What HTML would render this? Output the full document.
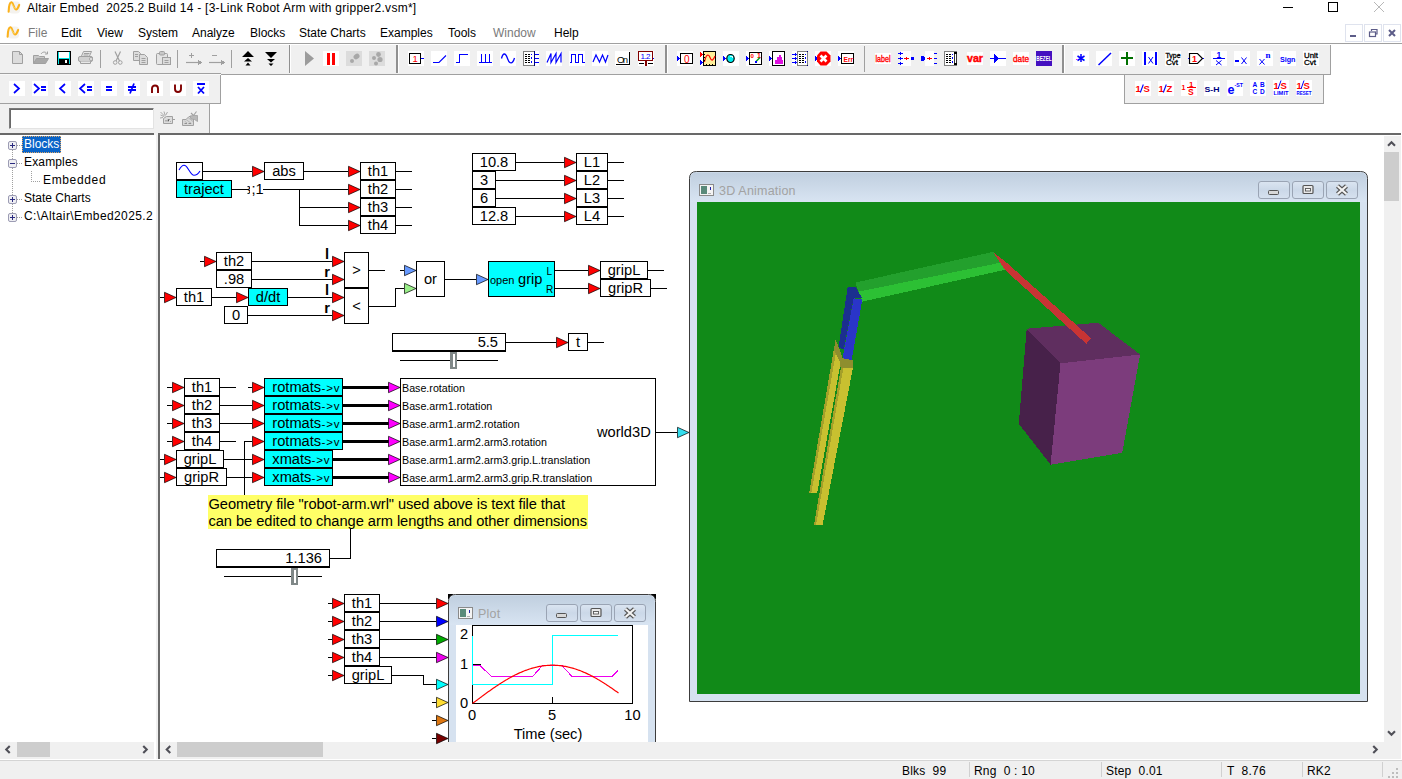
<!DOCTYPE html>
<html><head><meta charset="utf-8"><title>Altair Embed</title>
<style>
html,body{margin:0;padding:0;background:#fff;}
body{width:1402px;height:779px;overflow:hidden;position:relative;font-family:"Liberation Sans", sans-serif;}
.a{position:absolute;}
.t{position:absolute;white-space:nowrap;line-height:1;color:#000;}
svg text{font-family:"Liberation Sans", sans-serif;}
</style></head><body>
<div class="a" style="left:0px;top:43px;width:1402px;height:1px;background:#a0a0a0"></div>
<div class="a" style="left:0px;top:44px;width:1402px;height:1px;background:#fff"></div>
<div class="a" style="left:0px;top:45px;width:1330px;height:29px;background:#f0f0f0"></div>
<div class="a" style="left:221px;top:74px;width:1109px;height:1px;background:#a0a0a0"></div>
<div class="a" style="left:0px;top:73px;width:221px;height:1px;background:#a0a0a0"></div>
<div class="a" style="left:0px;top:74px;width:220px;height:1px;background:#f8f8f8"></div>
<div class="a" style="left:1330px;top:45px;width:1px;height:30px;background:#a0a0a0"></div>
<div class="a" style="left:289px;top:45px;width:1px;height:28px;background:#909090"></div>
<div class="a" style="left:290px;top:45px;width:1px;height:28px;background:#fff"></div>
<div class="a" style="left:396px;top:45px;width:2px;height:28px;background:#909090"></div>
<div class="a" style="left:398px;top:45px;width:1px;height:28px;background:#fff"></div>
<div class="a" style="left:665px;top:45px;width:2px;height:28px;background:#909090"></div>
<div class="a" style="left:667px;top:45px;width:1px;height:28px;background:#fff"></div>
<div class="a" style="left:1062px;top:45px;width:2px;height:28px;background:#909090"></div>
<div class="a" style="left:1064px;top:45px;width:1px;height:28px;background:#fff"></div>
<div class="a" style="left:100px;top:50px;width:1px;height:18px;background:#a0a0a0"></div>
<div class="a" style="left:177px;top:50px;width:1px;height:18px;background:#a0a0a0"></div>
<div class="a" style="left:231px;top:50px;width:1px;height:18px;background:#a0a0a0"></div>
<div class="a" style="left:864px;top:46px;width:1px;height:26px;background:#a0a0a0"></div>
<div class="a" style="left:0px;top:75px;width:220px;height:28px;background:#f0f0f0"></div>
<div class="a" style="left:0px;top:103px;width:221px;height:1px;background:#a0a0a0"></div>
<div class="a" style="left:220px;top:75px;width:1px;height:29px;background:#a0a0a0"></div>
<div class="a" style="left:0px;top:104px;width:209px;height:29px;background:#f0f0f0"></div>
<div class="a" style="left:209px;top:104px;width:1px;height:29px;background:#a0a0a0"></div>
<div class="a" style="left:1124px;top:75px;width:200px;height:29px;background:#f0f0f0"></div>
<div class="a" style="left:1124px;top:74px;width:1px;height:30px;background:#a0a0a0"></div>
<div class="a" style="left:1323px;top:74px;width:1px;height:30px;background:#a0a0a0"></div>
<div class="a" style="left:1124px;top:103px;width:200px;height:1px;background:#a0a0a0"></div>
<div class="a" style="left:9px;top:108px;width:145px;height:21px;background:#fff;border:1px solid #7a7a7a;border-right-color:#e3e3e3;border-bottom-color:#e3e3e3;box-sizing:border-box;box-shadow:inset 1px 1px 0 #696969"></div>
<div class="a" style="left:0px;top:133px;width:154px;height:2px;background:#696969"></div>
<div class="a" style="left:158px;top:133px;width:1243px;height:2px;background:#696969"></div>
<div class="a" style="left:154px;top:133px;width:4px;height:2px;background:#f4f4f4"></div>
<div class="a" style="left:0px;top:135px;width:154px;height:607px;background:#fff"></div>
<div class="a" style="left:154px;top:135px;width:2px;height:624px;background:#fff"></div>
<div class="a" style="left:156px;top:135px;width:2px;height:624px;background:#f0f0f0"></div>
<div class="a" style="left:158px;top:135px;width:2px;height:624px;background:#696969"></div>
<div class="a" style="left:0px;top:742px;width:154px;height:17px;background:#f0f0f0"></div>
<div class="a" style="left:160px;top:742px;width:1241px;height:17px;background:#f0f0f0"></div>
<div class="a" style="left:0px;top:761px;width:1402px;height:18px;background:#f0f0f0"></div>
<div class="a" style="left:0px;top:760px;width:1402px;height:1px;background:#d4d4d4"></div>
<div class="a" style="left:17px;top:742px;width:33px;height:15px;background:#cdcdcd"></div>
<div class="a" style="left:177px;top:742px;width:146px;height:15px;background:#cdcdcd"></div>
<div class="a" style="left:1384px;top:136px;width:17px;height:606px;background:#f0f0f0"></div>
<div class="a" style="left:1384px;top:152px;width:15px;height:49px;background:#cdcdcd"></div>
<div class="a" style="left:1401px;top:135px;width:1px;height:624px;background:#fff"></div>
<svg class="a" style="left:0;top:0" width="1402" height="779"><path d="M9.75 746.0 L6.25 749.5 L9.75 753.0" fill="none" stroke="#505058" stroke-width="2.1"/><path d="M143.25 746.0 L146.75 749.5 L143.25 753.0" fill="none" stroke="#505058" stroke-width="2.1"/><path d="M170.25 746.0 L166.75 749.5 L170.25 753.0" fill="none" stroke="#505058" stroke-width="2.1"/><path d="M1373.25 746.0 L1376.75 749.5 L1373.25 753.0" fill="none" stroke="#505058" stroke-width="2.1"/><path d="M1388.0 145.75 L1391.5 142.25 L1395.0 145.75" fill="none" stroke="#505058" stroke-width="2.1"/><path d="M1388.0 731.25 L1391.5 734.75 L1395.0 731.25" fill="none" stroke="#505058" stroke-width="2.1"/></svg>
<div class="a" style="left:969px;top:762px;width:1px;height:15px;background:#d0d0d0"></div>
<div class="a" style="left:1101px;top:762px;width:1px;height:15px;background:#d0d0d0"></div>
<div class="a" style="left:1221px;top:762px;width:1px;height:15px;background:#d0d0d0"></div>
<div class="a" style="left:1302px;top:762px;width:1px;height:15px;background:#d0d0d0"></div>
<div class="a" style="left:1382px;top:762px;width:1px;height:15px;background:#d0d0d0"></div>
<div class="t" style="left:902px;top:765px;font-size:12px;color:#000;letter-spacing:0.2px">Blks&nbsp;&nbsp;99</div>
<div class="t" style="left:974px;top:765px;font-size:12px;color:#000;letter-spacing:0.2px">Rng&nbsp;&nbsp;0 : 10</div>
<div class="t" style="left:1106px;top:765px;font-size:12px;color:#000;letter-spacing:0.2px">Step&nbsp;&nbsp;0.01</div>
<div class="t" style="left:1227px;top:765px;font-size:12px;color:#000;letter-spacing:0.2px">T&nbsp;&nbsp;8.76</div>
<div class="t" style="left:1307px;top:765px;font-size:12px;color:#000;letter-spacing:0.2px">RK2</div>
<svg class="a" style="left:1388px;top:766px" width="12" height="12"><g fill="#bdbdbd"><rect x="8" y="2" width="2" height="2"/><rect x="8" y="6" width="2" height="2"/><rect x="4" y="6" width="2" height="2"/><rect x="8" y="10" width="2" height="2"/><rect x="4" y="10" width="2" height="2"/><rect x="0" y="10" width="2" height="2"/></g></svg>
<div class="t" style="left:27px;top:2px;font-size:12px;color:#000;letter-spacing:0.27px">Altair Embed&nbsp;&nbsp;2025.2 Build 14 - [3-Link Robot Arm with gripper2.vsm*]</div>
<div class="t" style="left:28px;top:27px;font-size:12px;color:#7a7a7a;">File</div>
<div class="t" style="left:61px;top:27px;font-size:12px;color:#000;">Edit</div>
<div class="t" style="left:97px;top:27px;font-size:12px;color:#000;">View</div>
<div class="t" style="left:138px;top:27px;font-size:12px;color:#000;">System</div>
<div class="t" style="left:192px;top:27px;font-size:12px;color:#000;">Analyze</div>
<div class="t" style="left:250px;top:27px;font-size:12px;color:#000;">Blocks</div>
<div class="t" style="left:299px;top:27px;font-size:12px;color:#000;">State Charts</div>
<div class="t" style="left:380px;top:27px;font-size:12px;color:#000;">Examples</div>
<div class="t" style="left:448px;top:27px;font-size:12px;color:#000;">Tools</div>
<div class="t" style="left:493px;top:27px;font-size:12px;color:#7a7a7a;">Window</div>
<div class="t" style="left:554px;top:27px;font-size:12px;color:#000;">Help</div>
<svg class="a" style="left:7px;top:1px" width="14" height="13" viewBox="0 0 16 15"><rect x="2" y="0.5" width="13" height="14" rx="4" fill="#f4f2ee"/><path d="M1.8 12.5 C2 4,3.500 1.300,5.300 1.600 C7.500 2,7.800 9.500,10.300 9.800 C12 10,13 7,14 4.500" fill="none" stroke="#fbb21c" stroke-width="2.400" stroke-linecap="round"/><path d="M4.800 2.500 C6.500 4,7.500 8.500,10 9" fill="none" stroke="#fde27a" stroke-width="1"/></svg>
<svg class="a" style="left:6px;top:26px" width="14" height="13" viewBox="0 0 16 15"><rect x="2" y="0.5" width="13" height="14" rx="4" fill="#f4f2ee"/><path d="M1.8 12.5 C2 4,3.500 1.300,5.300 1.600 C7.500 2,7.800 9.500,10.300 9.800 C12 10,13 7,14 4.500" fill="none" stroke="#fbb21c" stroke-width="2.400" stroke-linecap="round"/><path d="M4.800 2.500 C6.500 4,7.500 8.500,10 9" fill="none" stroke="#fde27a" stroke-width="1"/></svg>
<svg class="a" style="left:1260px;top:0" width="142" height="44"><rect x="23" y="7" width="10" height="1" fill="#000"/><rect x="68.5" y="2.5" width="9" height="9" fill="none" stroke="#000"/><path d="M114 2 L124 12 M124 2 L114 12" stroke="#b0b0b0" stroke-width="0.9" fill="none"/><rect x="85.5" y="24.5" width="17" height="17" fill="#fff" stroke="#dfe3ee"/><rect x="104.5" y="24.5" width="17" height="17" fill="#fff" stroke="#dfe3ee"/><rect x="123.5" y="24.5" width="17" height="17" fill="#fff" stroke="#dfe3ee"/><rect x="90" y="35" width="6" height="2" fill="#5c5c88"/><path d="M111.5 31 V29.500 H117 V34 H115.500" fill="none" stroke="#5c5c88" stroke-width="1.2"/><rect x="109.500" y="32" width="6" height="4.500" fill="#fff" stroke="#5c5c88" stroke-width="1.2"/><path d="M129 30 L135 36 M135 30 L129 36" stroke="#5c5c88" stroke-width="2" fill="none"/></svg>
<svg class="a" style="left:0;top:136px" width="154" height="100" shape-rendering="crispEdges"><g stroke="#a0a0a0" stroke-dasharray="1 1" fill="none"><path d="M12.5 14 V78"/><path d="M17 9.500 H22"/><path d="M17 27.500 H22"/><path d="M31.500 35 V45.500 H40"/><path d="M17 63.500 H22"/><path d="M17 81.500 H22"/></g><rect x="8.5" y="5.5" width="8" height="8" rx="1.5" fill="#eeeef2" stroke="#9c9cb4" shape-rendering="geometricPrecision"/><rect x="10" y="9" width="5" height="1" fill="#2a2a80"/><rect x="12" y="7" width="1" height="5" fill="#2a2a80"/><rect x="8.5" y="23.5" width="8" height="8" rx="1.5" fill="#eeeef2" stroke="#9c9cb4" shape-rendering="geometricPrecision"/><rect x="10" y="27" width="5" height="1" fill="#2a2a80"/><rect x="8.5" y="59.5" width="8" height="8" rx="1.5" fill="#eeeef2" stroke="#9c9cb4" shape-rendering="geometricPrecision"/><rect x="10" y="63" width="5" height="1" fill="#2a2a80"/><rect x="12" y="61" width="1" height="5" fill="#2a2a80"/><rect x="8.5" y="77.5" width="8" height="8" rx="1.5" fill="#eeeef2" stroke="#9c9cb4" shape-rendering="geometricPrecision"/><rect x="10" y="81" width="5" height="1" fill="#2a2a80"/><rect x="12" y="79" width="1" height="5" fill="#2a2a80"/></svg>
<div class="a" style="left:22px;top:136px;width:39px;height:17px;background:#0a64c8;outline:1px dotted #e0a868;outline-offset:-1px"></div>
<div class="t" style="left:24px;top:138px;font-size:12px;color:#fff;">Blocks</div>
<div class="t" style="left:24px;top:156px;font-size:12px;color:#000;letter-spacing:0.15px">Examples</div>
<div class="t" style="left:43px;top:174px;font-size:12px;color:#000;letter-spacing:0.65px">Embedded</div>
<div class="t" style="left:24px;top:192px;font-size:12px;color:#000;">State Charts</div>
<div class="t" style="left:24px;top:210px;font-size:12px;color:#000;letter-spacing:0.4px">C:\Altair\Embed2025.2</div>
<svg class="a" style="left:0;top:0" width="1402" height="779" viewBox="0 0 1402 779" shape-rendering="crispEdges">
<rect x="176.5" y="162.5" width="26" height="17" fill="#fff" stroke="#000" stroke-width="1"/>
<path d="M179 170 C180.500 167.500,182 165.300,184 165.300 C186.500 165.300,187.500 168,189 170.300 C190.500 172.800,192 175.300,194 175.300 C196.500 175.300,198.500 173.500,200 171" fill="none" stroke="#0000ff" stroke-width="1.1" shape-rendering="geometricPrecision"/>
<rect x="176.5" y="180.5" width="55" height="17" fill="#00ffff" stroke="#000" stroke-width="1"/>
<text x="204.0" y="194.1345" font-size="14.67" text-anchor="middle" fill="#000" >traject</text>
<rect x="203" y="171" width="49" height="1" fill="#000"/>
<polygon points="252.5,166.3 264,171.5 252.5,176.7" fill="#ff0000" stroke="#000" stroke-width="0.7" shape-rendering="geometricPrecision"/>
<rect x="264.5" y="162.5" width="39" height="17" fill="#fff" stroke="#000" stroke-width="1"/>
<text x="284.0" y="176.1345" font-size="14.67" text-anchor="middle" fill="#000" >abs</text>
<rect x="304" y="171" width="44" height="1" fill="#000"/>
<polygon points="348.5,166.3 360,171.5 348.5,176.7" fill="#ff0000" stroke="#000" stroke-width="0.7" shape-rendering="geometricPrecision"/>
<rect x="232" y="189" width="16" height="1" fill="#000"/>
<clipPath id="cpsemi"><rect x="247.5" y="180" width="2.5" height="20"/></clipPath><text x="244.500" y="194" font-size="14.67" clip-path="url(#cpsemi)">&#1079;</text>
<text x="251.5" y="194" font-size="14.67" text-anchor="start" fill="#000" >;1</text>
<rect x="263" y="189" width="85" height="1" fill="#000"/>
<polygon points="348.5,184.3 360,189.5 348.5,194.7" fill="#ff0000" stroke="#000" stroke-width="0.7" shape-rendering="geometricPrecision"/>
<rect x="299" y="189" width="1" height="37" fill="#000"/>
<rect x="299" y="207" width="49" height="1" fill="#000"/>
<polygon points="348.5,202.3 360,207.5 348.5,212.7" fill="#ff0000" stroke="#000" stroke-width="0.7" shape-rendering="geometricPrecision"/>
<rect x="299" y="225" width="49" height="1" fill="#000"/>
<polygon points="348.5,220.3 360,225.5 348.5,230.7" fill="#ff0000" stroke="#000" stroke-width="0.7" shape-rendering="geometricPrecision"/>
<rect x="360.5" y="162.5" width="35" height="17" fill="#fff" stroke="#000" stroke-width="1"/>
<text x="378.0" y="176.1345" font-size="14.67" text-anchor="middle" fill="#000" >th1</text>
<rect x="396" y="171" width="16" height="1" fill="#000"/>
<rect x="360.5" y="180.5" width="35" height="17" fill="#fff" stroke="#000" stroke-width="1"/>
<text x="378.0" y="194.1345" font-size="14.67" text-anchor="middle" fill="#000" >th2</text>
<rect x="396" y="189" width="16" height="1" fill="#000"/>
<rect x="360.5" y="198.5" width="35" height="17" fill="#fff" stroke="#000" stroke-width="1"/>
<text x="378.0" y="212.1345" font-size="14.67" text-anchor="middle" fill="#000" >th3</text>
<rect x="396" y="207" width="16" height="1" fill="#000"/>
<rect x="360.5" y="216.5" width="35" height="17" fill="#fff" stroke="#000" stroke-width="1"/>
<text x="378.0" y="230.1345" font-size="14.67" text-anchor="middle" fill="#000" >th4</text>
<rect x="396" y="225" width="16" height="1" fill="#000"/>
<rect x="472.5" y="153.5" width="43" height="17" fill="#fff" stroke="#000" stroke-width="1"/>
<text x="494.0" y="167.1345" font-size="14.67" text-anchor="middle" fill="#000" >10.8</text>
<rect x="516" y="162" width="48" height="1" fill="#000"/>
<polygon points="564.5,157.3 576,162.5 564.5,167.7" fill="#ff0000" stroke="#000" stroke-width="0.7" shape-rendering="geometricPrecision"/>
<rect x="576.5" y="153.5" width="31" height="17" fill="#fff" stroke="#000" stroke-width="1"/>
<text x="592.0" y="167.1345" font-size="14.67" text-anchor="middle" fill="#000" >L1</text>
<rect x="608" y="162" width="16" height="1" fill="#000"/>
<rect x="472.5" y="171.5" width="23" height="17" fill="#fff" stroke="#000" stroke-width="1"/>
<text x="484.0" y="185.1345" font-size="14.67" text-anchor="middle" fill="#000" >3</text>
<rect x="496" y="180" width="68" height="1" fill="#000"/>
<polygon points="564.5,175.3 576,180.5 564.5,185.7" fill="#ff0000" stroke="#000" stroke-width="0.7" shape-rendering="geometricPrecision"/>
<rect x="576.5" y="171.5" width="31" height="17" fill="#fff" stroke="#000" stroke-width="1"/>
<text x="592.0" y="185.1345" font-size="14.67" text-anchor="middle" fill="#000" >L2</text>
<rect x="608" y="180" width="16" height="1" fill="#000"/>
<rect x="472.5" y="189.5" width="23" height="17" fill="#fff" stroke="#000" stroke-width="1"/>
<text x="484.0" y="203.1345" font-size="14.67" text-anchor="middle" fill="#000" >6</text>
<rect x="496" y="198" width="68" height="1" fill="#000"/>
<polygon points="564.5,193.3 576,198.5 564.5,203.7" fill="#ff0000" stroke="#000" stroke-width="0.7" shape-rendering="geometricPrecision"/>
<rect x="576.5" y="189.5" width="31" height="17" fill="#fff" stroke="#000" stroke-width="1"/>
<text x="592.0" y="203.1345" font-size="14.67" text-anchor="middle" fill="#000" >L3</text>
<rect x="608" y="198" width="16" height="1" fill="#000"/>
<rect x="472.5" y="207.5" width="43" height="17" fill="#fff" stroke="#000" stroke-width="1"/>
<text x="494.0" y="221.1345" font-size="14.67" text-anchor="middle" fill="#000" >12.8</text>
<rect x="516" y="216" width="48" height="1" fill="#000"/>
<polygon points="564.5,211.3 576,216.5 564.5,221.7" fill="#ff0000" stroke="#000" stroke-width="0.7" shape-rendering="geometricPrecision"/>
<rect x="576.5" y="207.5" width="31" height="17" fill="#fff" stroke="#000" stroke-width="1"/>
<text x="592.0" y="221.1345" font-size="14.67" text-anchor="middle" fill="#000" >L4</text>
<rect x="608" y="216" width="16" height="1" fill="#000"/>
<rect x="200" y="261" width="4" height="1" fill="#000"/>
<polygon points="204.5,256.3 216,261.5 204.5,266.7" fill="#ff0000" stroke="#000" stroke-width="0.7" shape-rendering="geometricPrecision"/>
<rect x="216.5" y="252.5" width="35" height="17" fill="#fff" stroke="#000" stroke-width="1"/>
<text x="234.0" y="266.1345" font-size="14.67" text-anchor="middle" fill="#000" >th2</text>
<rect x="216.5" y="270.5" width="35" height="17" fill="#fff" stroke="#000" stroke-width="1"/>
<text x="234.0" y="284.1345" font-size="14.67" text-anchor="middle" fill="#000" >.98</text>
<rect x="160" y="297" width="4" height="1" fill="#000"/>
<polygon points="164.5,292.3 176,297.5 164.5,302.7" fill="#ff0000" stroke="#000" stroke-width="0.7" shape-rendering="geometricPrecision"/>
<rect x="176.5" y="288.5" width="35" height="17" fill="#fff" stroke="#000" stroke-width="1"/>
<text x="194.0" y="302.1345" font-size="14.67" text-anchor="middle" fill="#000" >th1</text>
<rect x="212" y="297" width="24" height="1" fill="#000"/>
<polygon points="236.5,292.3 248,297.5 236.5,302.7" fill="#ff0000" stroke="#000" stroke-width="0.7" shape-rendering="geometricPrecision"/>
<rect x="248.5" y="288.5" width="39" height="17" fill="#00ffff" stroke="#000" stroke-width="1"/>
<text x="268.0" y="302.1345" font-size="14.67" text-anchor="middle" fill="#000" >d/dt</text>
<rect x="224.5" y="306.5" width="23" height="17" fill="#fff" stroke="#000" stroke-width="1"/>
<text x="236.0" y="320.1345" font-size="14.67" text-anchor="middle" fill="#000" >0</text>
<rect x="252" y="261" width="80" height="1" fill="#000"/>
<polygon points="332.5,256.3 344,261.5 332.5,266.7" fill="#ff0000" stroke="#000" stroke-width="0.7" shape-rendering="geometricPrecision"/>
<rect x="252" y="279" width="80" height="1" fill="#000"/>
<polygon points="332.5,274.3 344,279.5 332.5,284.7" fill="#ff0000" stroke="#000" stroke-width="0.7" shape-rendering="geometricPrecision"/>
<rect x="288" y="297" width="44" height="1" fill="#000"/>
<polygon points="332.5,292.3 344,297.5 332.5,302.7" fill="#ff0000" stroke="#000" stroke-width="0.7" shape-rendering="geometricPrecision"/>
<rect x="248" y="315" width="84" height="1" fill="#000"/>
<polygon points="332.5,310.3 344,315.5 332.5,320.7" fill="#ff0000" stroke="#000" stroke-width="0.7" shape-rendering="geometricPrecision"/>
<text x="327" y="259" font-size="14.67" text-anchor="middle" fill="#000" font-weight="bold">l</text>
<text x="327" y="277" font-size="14.67" text-anchor="middle" fill="#000" font-weight="bold">r</text>
<text x="327" y="295" font-size="14.67" text-anchor="middle" fill="#000" font-weight="bold">l</text>
<text x="327" y="313" font-size="14.67" text-anchor="middle" fill="#000" font-weight="bold">r</text>
<rect x="344.5" y="252.5" width="24" height="35" fill="#fff" stroke="#000" stroke-width="1"/>
<text x="356.5" y="275.1345" font-size="14.67" text-anchor="middle" fill="#000" >&gt;</text>
<rect x="344.5" y="288.5" width="24" height="35" fill="#fff" stroke="#000" stroke-width="1"/>
<text x="356.5" y="311.1345" font-size="14.67" text-anchor="middle" fill="#000" >&lt;</text>
<rect x="369" y="270" width="16" height="1" fill="#000"/>
<rect x="369" y="306" width="27" height="1" fill="#000"/>
<rect x="395" y="288" width="1" height="19" fill="#000"/>
<rect x="395" y="288" width="9" height="1" fill="#000"/>
<rect x="400" y="270" width="4" height="1" fill="#000"/>
<polygon points="404.5,265.3 416,270.5 404.5,275.7" fill="#6699ff" stroke="#000" stroke-width="0.7" shape-rendering="geometricPrecision"/>
<polygon points="404.5,283.3 416,288.5 404.5,293.7" fill="#99ee88" stroke="#000" stroke-width="0.7" shape-rendering="geometricPrecision"/>
<rect x="416.5" y="261.5" width="28" height="35" fill="#fff" stroke="#000" stroke-width="1"/>
<text x="430.5" y="284.1345" font-size="14.67" text-anchor="middle" fill="#000" >or</text>
<rect x="445" y="279" width="31" height="1" fill="#000"/>
<polygon points="476.5,274.3 488,279.5 476.5,284.7" fill="#6699ff" stroke="#000" stroke-width="0.7" shape-rendering="geometricPrecision"/>
<rect x="488.5" y="261.5" width="66" height="35" fill="#00ffff" stroke="#000" stroke-width="1"/>
<text x="490" y="284" font-size="11" text-anchor="start" fill="#000" >open</text>
<text x="518" y="284" font-size="14.67" text-anchor="start" fill="#000" >grip</text>
<text x="546.5" y="275" font-size="10" text-anchor="start" fill="#000" >L</text>
<text x="546" y="293" font-size="10" text-anchor="start" fill="#000" >R</text>
<rect x="555" y="270" width="33" height="1" fill="#000"/>
<polygon points="588.5,265.3 600,270.5 588.5,275.7" fill="#ff0000" stroke="#000" stroke-width="0.7" shape-rendering="geometricPrecision"/>
<rect x="555" y="288" width="33" height="1" fill="#000"/>
<polygon points="588.5,283.3 600,288.5 588.5,293.7" fill="#ff0000" stroke="#000" stroke-width="0.7" shape-rendering="geometricPrecision"/>
<rect x="600.5" y="261.5" width="47" height="17" fill="#fff" stroke="#000" stroke-width="1"/>
<text x="624.0" y="275.1345" font-size="14.67" text-anchor="middle" fill="#000" >gripL</text>
<rect x="600.5" y="279.5" width="50" height="17" fill="#fff" stroke="#000" stroke-width="1"/>
<text x="625.5" y="293.1345" font-size="14.67" text-anchor="middle" fill="#000" >gripR</text>
<rect x="648" y="270" width="16" height="1" fill="#000"/>
<rect x="651" y="288" width="16" height="1" fill="#000"/>
<rect x="392.5" y="333.5" width="113" height="17" fill="#fff" stroke="#000" stroke-width="1"/>
<rect x="392" y="351" width="114" height="1" fill="#000"/>
<text x="498" y="347" font-size="14.67" text-anchor="end" fill="#000" >5.5</text>
<rect x="506" y="342" width="50" height="1" fill="#000"/>
<polygon points="556.5,337.3 568,342.5 556.5,347.7" fill="#ff0000" stroke="#000" stroke-width="0.7" shape-rendering="geometricPrecision"/>
<rect x="568.5" y="333.5" width="19" height="17" fill="#fff" stroke="#000" stroke-width="1"/>
<text x="578.0" y="347.1345" font-size="14.67" text-anchor="middle" fill="#000" >t</text>
<rect x="588" y="342" width="16" height="1" fill="#000"/>
<rect x="400" y="360" width="98" height="1" fill="#000"/>
<rect x="450" y="352" width="7" height="17" fill="#808888"/><rect x="452.5" y="354" width="2" height="13" fill="#fff"/>
<rect x="167" y="387" width="5" height="1" fill="#000"/>
<polygon points="172.5,382.3 184,387.5 172.5,392.7" fill="#ff0000" stroke="#000" stroke-width="0.7" shape-rendering="geometricPrecision"/>
<rect x="184.5" y="378.5" width="35" height="17" fill="#fff" stroke="#000" stroke-width="1"/>
<text x="202.0" y="392.1345" font-size="14.67" text-anchor="middle" fill="#000" >th1</text>
<rect x="167" y="405" width="5" height="1" fill="#000"/>
<polygon points="172.5,400.3 184,405.5 172.5,410.7" fill="#ff0000" stroke="#000" stroke-width="0.7" shape-rendering="geometricPrecision"/>
<rect x="184.5" y="396.5" width="35" height="17" fill="#fff" stroke="#000" stroke-width="1"/>
<text x="202.0" y="410.1345" font-size="14.67" text-anchor="middle" fill="#000" >th2</text>
<rect x="167" y="423" width="5" height="1" fill="#000"/>
<polygon points="172.5,418.3 184,423.5 172.5,428.7" fill="#ff0000" stroke="#000" stroke-width="0.7" shape-rendering="geometricPrecision"/>
<rect x="184.5" y="414.5" width="35" height="17" fill="#fff" stroke="#000" stroke-width="1"/>
<text x="202.0" y="428.1345" font-size="14.67" text-anchor="middle" fill="#000" >th3</text>
<rect x="167" y="441" width="5" height="1" fill="#000"/>
<polygon points="172.5,436.3 184,441.5 172.5,446.7" fill="#ff0000" stroke="#000" stroke-width="0.7" shape-rendering="geometricPrecision"/>
<rect x="184.5" y="432.5" width="35" height="17" fill="#fff" stroke="#000" stroke-width="1"/>
<text x="202.0" y="446.1345" font-size="14.67" text-anchor="middle" fill="#000" >th4</text>
<rect x="160" y="459" width="4" height="1" fill="#000"/>
<polygon points="164.5,454.3 176,459.5 164.5,464.7" fill="#ff0000" stroke="#000" stroke-width="0.7" shape-rendering="geometricPrecision"/>
<rect x="176.5" y="450.5" width="47" height="17" fill="#fff" stroke="#000" stroke-width="1"/>
<text x="200.0" y="464.1345" font-size="14.67" text-anchor="middle" fill="#000" >gripL</text>
<rect x="160" y="477" width="4" height="1" fill="#000"/>
<polygon points="164.5,472.3 176,477.5 164.5,482.7" fill="#ff0000" stroke="#000" stroke-width="0.7" shape-rendering="geometricPrecision"/>
<rect x="176.5" y="468.5" width="50" height="17" fill="#fff" stroke="#000" stroke-width="1"/>
<text x="201.5" y="482.1345" font-size="14.67" text-anchor="middle" fill="#000" >gripR</text>
<rect x="220" y="387" width="16" height="1" fill="#000"/>
<rect x="248" y="387" width="4" height="1" fill="#000"/>
<rect x="220" y="405" width="32" height="1" fill="#000"/>
<rect x="220" y="423" width="32" height="1" fill="#000"/>
<rect x="220" y="441" width="16" height="1" fill="#000"/>
<rect x="244" y="441" width="1" height="54" fill="#000"/>
<rect x="244" y="441" width="8" height="1" fill="#000"/>
<rect x="224" y="459" width="28" height="1" fill="#000"/>
<rect x="227" y="477" width="25" height="1" fill="#000"/>
<rect x="400.5" y="378.5" width="255" height="107" fill="#fff" stroke="#000" stroke-width="1"/>
<polygon points="252.5,382.3 264,387.5 252.5,392.7" fill="#ff0000" stroke="#000" stroke-width="0.7" shape-rendering="geometricPrecision"/>
<rect x="264.5" y="378.5" width="78" height="17" fill="#00ffff" stroke="#000" stroke-width="1"/>
<text x="272.3" y="392" font-size="14.67" text-anchor="start" fill="#000" >rotmats</text>
<text x="321.5" y="391.5" font-size="11.5" text-anchor="start" fill="#000" textLength="18">-&gt;v</text>
<rect x="343" y="386" width="46" height="3" fill="#000"/>
<polygon points="388.5,382.3 400,387.5 388.5,392.7" fill="#ff00ff" stroke="#000" stroke-width="0.7" shape-rendering="geometricPrecision"/>
<text x="402" y="391.5" font-size="10.7" text-anchor="start" fill="#000" >Base.rotation</text>
<polygon points="252.5,400.3 264,405.5 252.5,410.7" fill="#ff0000" stroke="#000" stroke-width="0.7" shape-rendering="geometricPrecision"/>
<rect x="264.5" y="396.5" width="78" height="17" fill="#00ffff" stroke="#000" stroke-width="1"/>
<text x="272.3" y="410" font-size="14.67" text-anchor="start" fill="#000" >rotmats</text>
<text x="321.5" y="409.5" font-size="11.5" text-anchor="start" fill="#000" textLength="18">-&gt;v</text>
<rect x="343" y="404" width="46" height="3" fill="#000"/>
<polygon points="388.5,400.3 400,405.5 388.5,410.7" fill="#ff00ff" stroke="#000" stroke-width="0.7" shape-rendering="geometricPrecision"/>
<text x="402" y="409.5" font-size="10.7" text-anchor="start" fill="#000" >Base.arm1.rotation</text>
<polygon points="252.5,418.3 264,423.5 252.5,428.7" fill="#ff0000" stroke="#000" stroke-width="0.7" shape-rendering="geometricPrecision"/>
<rect x="264.5" y="414.5" width="78" height="17" fill="#00ffff" stroke="#000" stroke-width="1"/>
<text x="272.3" y="428" font-size="14.67" text-anchor="start" fill="#000" >rotmats</text>
<text x="321.5" y="427.5" font-size="11.5" text-anchor="start" fill="#000" textLength="18">-&gt;v</text>
<rect x="343" y="422" width="46" height="3" fill="#000"/>
<polygon points="388.5,418.3 400,423.5 388.5,428.7" fill="#ff00ff" stroke="#000" stroke-width="0.7" shape-rendering="geometricPrecision"/>
<text x="402" y="427.5" font-size="10.7" text-anchor="start" fill="#000" >Base.arm1.arm2.rotation</text>
<polygon points="252.5,436.3 264,441.5 252.5,446.7" fill="#ff0000" stroke="#000" stroke-width="0.7" shape-rendering="geometricPrecision"/>
<rect x="264.5" y="432.5" width="78" height="17" fill="#00ffff" stroke="#000" stroke-width="1"/>
<text x="272.3" y="446" font-size="14.67" text-anchor="start" fill="#000" >rotmats</text>
<text x="321.5" y="445.5" font-size="11.5" text-anchor="start" fill="#000" textLength="18">-&gt;v</text>
<rect x="343" y="440" width="46" height="3" fill="#000"/>
<polygon points="388.5,436.3 400,441.5 388.5,446.7" fill="#ff00ff" stroke="#000" stroke-width="0.7" shape-rendering="geometricPrecision"/>
<text x="402" y="445.5" font-size="10.7" text-anchor="start" fill="#000" >Base.arm1.arm2.arm3.rotation</text>
<polygon points="252.5,454.3 264,459.5 252.5,464.7" fill="#ff0000" stroke="#000" stroke-width="0.7" shape-rendering="geometricPrecision"/>
<rect x="264.5" y="450.5" width="68" height="17" fill="#00ffff" stroke="#000" stroke-width="1"/>
<text x="272.3" y="464" font-size="14.67" text-anchor="start" fill="#000" >xmats</text>
<text x="311.5" y="463.5" font-size="11.5" text-anchor="start" fill="#000" textLength="18">-&gt;v</text>
<rect x="333" y="458" width="56" height="3" fill="#000"/>
<polygon points="388.5,454.3 400,459.5 388.5,464.7" fill="#ff00ff" stroke="#000" stroke-width="0.7" shape-rendering="geometricPrecision"/>
<text x="402" y="463.5" font-size="10.7" text-anchor="start" fill="#000" >Base.arm1.arm2.arm3.grip.L.translation</text>
<polygon points="252.5,472.3 264,477.5 252.5,482.7" fill="#ff0000" stroke="#000" stroke-width="0.7" shape-rendering="geometricPrecision"/>
<rect x="264.5" y="468.5" width="68" height="17" fill="#00ffff" stroke="#000" stroke-width="1"/>
<text x="272.3" y="482" font-size="14.67" text-anchor="start" fill="#000" >xmats</text>
<text x="311.5" y="481.5" font-size="11.5" text-anchor="start" fill="#000" textLength="18">-&gt;v</text>
<rect x="333" y="476" width="56" height="3" fill="#000"/>
<polygon points="388.5,472.3 400,477.5 388.5,482.7" fill="#ff00ff" stroke="#000" stroke-width="0.7" shape-rendering="geometricPrecision"/>
<text x="402" y="481.5" font-size="10.7" text-anchor="start" fill="#000" >Base.arm1.arm2.arm3.grip.R.translation</text>
<text x="597" y="437" font-size="14.67" text-anchor="start" fill="#000" >world3D</text>
<rect x="656" y="432" width="21" height="1" fill="#000"/>
<polygon points="677.5,427.3 689,432.5 677.5,437.7" fill="#33ddee" stroke="#000" stroke-width="0.7" shape-rendering="geometricPrecision"/>
<rect x="208" y="495" width="380" height="34" fill="#ffff66"/>
<text x="208.5" y="509" font-size="14.67" text-anchor="start" fill="#000" textLength="356.500">Geometry file "robot-arm.wrl" used above is text file that</text>
<text x="208.5" y="526" font-size="14.67" text-anchor="start" fill="#000" textLength="378.500">can be edited to change arm lengths and other dimensions</text>
<rect x="350" y="529" width="1" height="30" fill="#000"/>
<rect x="330" y="558" width="21" height="1" fill="#000"/>
<rect x="216.5" y="549.5" width="113" height="17" fill="#fff" stroke="#000" stroke-width="1"/>
<rect x="216" y="567" width="114" height="1" fill="#000"/>
<text x="322" y="563" font-size="14.67" text-anchor="end" fill="#000" >1.136</text>
<rect x="224" y="576" width="98" height="1" fill="#000"/>
<rect x="291" y="568" width="7" height="17" fill="#808888"/><rect x="293.5" y="570" width="2" height="13" fill="#fff"/>
<rect x="328" y="603" width="4" height="1" fill="#000"/>
<polygon points="332.5,598.3 344,603.5 332.5,608.7" fill="#ff0000" stroke="#000" stroke-width="0.7" shape-rendering="geometricPrecision"/>
<rect x="344.5" y="594.5" width="35" height="17" fill="#fff" stroke="#000" stroke-width="1"/>
<text x="362.0" y="608.1345" font-size="14.67" text-anchor="middle" fill="#000" >th1</text>
<rect x="328" y="621" width="4" height="1" fill="#000"/>
<polygon points="332.5,616.3 344,621.5 332.5,626.7" fill="#ff0000" stroke="#000" stroke-width="0.7" shape-rendering="geometricPrecision"/>
<rect x="344.5" y="612.5" width="35" height="17" fill="#fff" stroke="#000" stroke-width="1"/>
<text x="362.0" y="626.1345" font-size="14.67" text-anchor="middle" fill="#000" >th2</text>
<rect x="328" y="639" width="4" height="1" fill="#000"/>
<polygon points="332.5,634.3 344,639.5 332.5,644.7" fill="#ff0000" stroke="#000" stroke-width="0.7" shape-rendering="geometricPrecision"/>
<rect x="344.5" y="630.5" width="35" height="17" fill="#fff" stroke="#000" stroke-width="1"/>
<text x="362.0" y="644.1345" font-size="14.67" text-anchor="middle" fill="#000" >th3</text>
<rect x="328" y="657" width="4" height="1" fill="#000"/>
<polygon points="332.5,652.3 344,657.5 332.5,662.7" fill="#ff0000" stroke="#000" stroke-width="0.7" shape-rendering="geometricPrecision"/>
<rect x="344.5" y="648.5" width="35" height="17" fill="#fff" stroke="#000" stroke-width="1"/>
<text x="362.0" y="662.1345" font-size="14.67" text-anchor="middle" fill="#000" >th4</text>
<rect x="328" y="675" width="4" height="1" fill="#000"/>
<polygon points="332.5,670.3 344,675.5 332.5,680.7" fill="#ff0000" stroke="#000" stroke-width="0.7" shape-rendering="geometricPrecision"/>
<rect x="344.5" y="666.5" width="47" height="17" fill="#fff" stroke="#000" stroke-width="1"/>
<text x="368.0" y="680.1345" font-size="14.67" text-anchor="middle" fill="#000" >gripL</text>
<rect x="380" y="603" width="56" height="1" fill="#000"/>
<rect x="380" y="621" width="56" height="1" fill="#000"/>
<rect x="380" y="639" width="56" height="1" fill="#000"/>
<rect x="380" y="657" width="56" height="1" fill="#000"/>
<rect x="392" y="675" width="32" height="1" fill="#000"/>
<rect x="423" y="675" width="1" height="10" fill="#000"/>
<rect x="423" y="684" width="13" height="1" fill="#000"/>
<rect x="432" y="702" width="4" height="1" fill="#000"/>
<rect x="432" y="720" width="4" height="1" fill="#000"/>
<rect x="432" y="738" width="4" height="1" fill="#000"/>
<polygon points="436.5,598.3 448,603.5 436.5,608.7" fill="#ff0000" stroke="#000" stroke-width="0.7" shape-rendering="geometricPrecision"/>
<polygon points="436.5,616.3 448,621.5 436.5,626.7" fill="#0000ff" stroke="#000" stroke-width="0.7" shape-rendering="geometricPrecision"/>
<polygon points="436.5,634.3 448,639.5 436.5,644.7" fill="#00aa00" stroke="#000" stroke-width="0.7" shape-rendering="geometricPrecision"/>
<polygon points="436.5,652.3 448,657.5 436.5,662.7" fill="#ee00ee" stroke="#000" stroke-width="0.7" shape-rendering="geometricPrecision"/>
<polygon points="436.5,679.3 448,684.5 436.5,689.7" fill="#00ffff" stroke="#000" stroke-width="0.7" shape-rendering="geometricPrecision"/>
<polygon points="436.5,697.3 448,702.5 436.5,707.7" fill="#ffdd33" stroke="#000" stroke-width="0.7" shape-rendering="geometricPrecision"/>
<polygon points="436.5,715.3 448,720.5 436.5,725.7" fill="#dd7711" stroke="#000" stroke-width="0.7" shape-rendering="geometricPrecision"/>
<polygon points="436.5,733.3 448,738.5 436.5,743.7" fill="#770000" stroke="#000" stroke-width="0.7" shape-rendering="geometricPrecision"/>
<defs><linearGradient id="tg" x1="0" y1="0" x2="0" y2="1"><stop offset="0" stop-color="#c0cfdf"/><stop offset="1" stop-color="#d8e4f2"/></linearGradient><linearGradient id="bg" x1="0" y1="0" x2="0" y2="1"><stop offset="0" stop-color="#dbe5f1"/><stop offset="0.5" stop-color="#cbd8e8"/><stop offset="1" stop-color="#d6e1ef"/></linearGradient></defs>
<path d="M689.5 701.5 V178.5 Q689.5 171.5 696.5 171.5 H1360.5 Q1367.5 171.5 1367.5 178.5 V701.5 Z" fill="#d6e2f0" stroke="#3c3c3c" stroke-width="1" shape-rendering="geometricPrecision"/>
<path d="M690.5 202 V178.5 Q690.5 172.5 696.5 172.5 H1360.5 Q1366.5 172.5 1366.5 178.5 V202 Z" fill="url(#tg)" shape-rendering="geometricPrecision"/>
<rect x="697" y="202" width="663" height="492" fill="#118a18"/>
<rect x="699.0" y="184.0" width="14" height="11" fill="#f4f4f4" stroke="#8a8a8a"/>
<rect x="700.5" y="185.5" width="6" height="8" fill="#5a8a7a"/>
<rect x="709.5" y="186.5" width="1" height="3" fill="#2222aa"/>
<rect x="707.5" y="192.5" width="3" height="1" fill="#b0b0b0"/>
<text x="719.0" y="194.5" font-size="12.5" letter-spacing="0.2" fill="#a2a2a2">3D Animation</text>
<rect x="1258.5" y="181.5" width="31" height="17" rx="2.5" fill="url(#bg)" stroke="#9aa4b4" shape-rendering="geometricPrecision"/>
<rect x="1268.5" y="190.5" width="10" height="4" rx="1" fill="#d8d8d8" stroke="#555" shape-rendering="geometricPrecision"/>
<rect x="1292.5" y="181.5" width="31" height="17" rx="2.5" fill="url(#bg)" stroke="#9aa4b4" shape-rendering="geometricPrecision"/>
<rect x="1303.0" y="185.5" width="10" height="8" rx="1" fill="#e8e8e8" stroke="#555" stroke-width="1.2" shape-rendering="geometricPrecision"/>
<rect x="1305.5" y="188.5" width="5" height="2.5" fill="#f8f8f8" stroke="#555" stroke-width="0.9" shape-rendering="geometricPrecision"/>
<rect x="1326.5" y="181.5" width="31" height="17" rx="2.5" fill="url(#bg)" stroke="#9aa4b4" shape-rendering="geometricPrecision"/>
<path d="M1337.5 186.0 L1346.5 194.0 M1346.5 186.0 L1337.5 194.0" stroke="#555" stroke-width="4.4" fill="none" shape-rendering="geometricPrecision"/>
<path d="M1337.5 186.0 L1346.5 194.0 M1346.5 186.0 L1337.5 194.0" stroke="#f4f4f4" stroke-width="2.2" fill="none" shape-rendering="geometricPrecision"/>
<g shape-rendering="crispEdges">
<polygon points="855.6,282.5 992.9,251.9 1004.8,261.8 858.4,291.7" fill="#23a02d"/>
<polygon points="858.4,291.7 1004.8,261.8 1004.8,269.8 862.4,301.6" fill="#2cc034"/>
<polygon points="993.7,252.7 1004.8,261.0 1091.2,338.2 1086.4,343.8 1004.8,269.8" fill="#c83434"/>
<polygon points="835.5,340.0 840.0,350.0 842.5,358.0 853.0,360.0 853.0,368.5 841.0,368.5 833.8,350.0" fill="#8e8e2e"/>
<polygon points="833.8,349.4 840.5,363.3 817.1,493.4 809.1,493.4" fill="#c8c030"/>
<polygon points="833.8,349.4 835.8,353.4 811.3,493.4 809.1,493.4" fill="#a4a02a"/>
<polygon points="840.9,368.1 852.9,368.1 822.6,525.2 813.9,525.2" fill="#c8c030"/>
<polygon points="840.9,368.1 843.3,368.1 816.0,525.2 813.9,525.2" fill="#a4a02a"/>
<polygon points="847.7,286.9 855.6,286.9 862.4,298.4 853.7,298.4 843.7,349.4 838.5,347.4" fill="#1b2f8f"/>
<polygon points="853.7,298.4 862.4,299.4 851.7,360.1 842.5,358.1" fill="#2a35c8"/>
<polygon points="1026.7,328.7 1098.3,322.7 1140.1,354.5 1060.5,363.3" fill="#5f2e5f"/>
<polygon points="1026.7,328.7 1060.5,363.3 1050.6,464.7 1018.8,423.8" fill="#47214a"/>
<polygon points="1060.5,363.3 1140.1,354.5 1122.2,452.8 1050.6,464.7" fill="#7c3c7c"/>
<polygon points="1060.0,310.6 1091.2,338.2 1086.4,343.8 1055.0,315.5" fill="#c83434"/>
</g>
<g clip-path="url(#clipplot)"><clipPath id="clipplot"><rect x="440" y="590" width="230" height="152"/></clipPath>
<rect x="448" y="594" width="5" height="5" fill="#000"/><rect x="651" y="594" width="5" height="5" fill="#000"/>
<path d="M448.5 759.5 V601.5 Q448.5 594.5 455.5 594.5 H648.5 Q655.5 594.5 655.5 601.5 V759.5 Z" fill="#d6e2f0" stroke="#3c3c3c" stroke-width="1" shape-rendering="geometricPrecision"/>
<path d="M449.5 625 V601.5 Q449.5 595.5 455.5 595.5 H648.5 Q654.5 595.5 654.5 601.5 V625 Z" fill="url(#tg)" shape-rendering="geometricPrecision"/>
<rect x="456" y="625" width="192" height="135" fill="#fff"/>
<rect x="458.0" y="607.0" width="14" height="11" fill="#f4f4f4" stroke="#8a8a8a"/>
<rect x="459.5" y="608.5" width="6" height="8" fill="#5a8a7a"/>
<rect x="468.5" y="609.5" width="1" height="3" fill="#2222aa"/>
<rect x="466.5" y="615.5" width="3" height="1" fill="#b0b0b0"/>
<text x="478.0" y="617.5" font-size="12.5" letter-spacing="0.2" fill="#a2a2a2">Plot</text>
<rect x="546.5" y="604.5" width="31" height="17" rx="2.5" fill="url(#bg)" stroke="#9aa4b4" shape-rendering="geometricPrecision"/>
<rect x="556.5" y="613.5" width="10" height="4" rx="1" fill="#d8d8d8" stroke="#555" shape-rendering="geometricPrecision"/>
<rect x="580.5" y="604.5" width="31" height="17" rx="2.5" fill="url(#bg)" stroke="#9aa4b4" shape-rendering="geometricPrecision"/>
<rect x="591.0" y="608.5" width="10" height="8" rx="1" fill="#e8e8e8" stroke="#555" stroke-width="1.2" shape-rendering="geometricPrecision"/>
<rect x="593.5" y="611.5" width="5" height="2.5" fill="#f8f8f8" stroke="#555" stroke-width="0.9" shape-rendering="geometricPrecision"/>
<rect x="614.5" y="604.5" width="31" height="17" rx="2.5" fill="url(#bg)" stroke="#9aa4b4" shape-rendering="geometricPrecision"/>
<path d="M625.5 609.0 L634.5 617.0 M634.5 609.0 L625.5 617.0" stroke="#555" stroke-width="4.4" fill="none" shape-rendering="geometricPrecision"/>
<path d="M625.5 609.0 L634.5 617.0 M634.5 609.0 L625.5 617.0" stroke="#f4f4f4" stroke-width="2.2" fill="none" shape-rendering="geometricPrecision"/>
<rect x="472.5" y="625.5" width="160" height="78" fill="none" stroke="#000" shape-rendering="crispEdges"/>
<g shape-rendering="crispEdges">
<rect x="472" y="664" width="9" height="1" fill="#000"/><rect x="552" y="697" width="1" height="7" fill="#000"/>
<polyline points="472.5,635.5 472.5,684.5 552.5,684.5 552.5,635.5 618,635.5" fill="none" stroke="#00ffff"/>
<polyline points="472.5,665.5 480,665.5 491.5,676.5 532.5,676.5 542.5,665.5 562,665.5 572,676.5 612,676.5 618,670.5" fill="none" stroke="#ee00ee"/>
<polyline points="472.5,703.4 473.5,702.6 474.5,701.9 475.5,701.2 476.5,700.4 477.5,699.7 478.5,698.9 479.5,698.2 480.5,697.4 481.5,696.7 482.5,695.9 483.5,695.2 484.5,694.5 485.5,693.8 486.5,693.0 487.5,692.3 488.5,691.6 489.5,690.9 490.5,690.2 491.5,689.5 492.5,688.8 493.5,688.1 494.5,687.4 495.5,686.7 496.5,686.1 497.5,685.4 498.5,684.7 499.5,684.1 500.5,683.4 501.5,682.8 502.5,682.2 503.5,681.6 504.5,680.9 505.5,680.3 506.5,679.8 507.5,679.2 508.5,678.6 509.5,678.0 510.5,677.5 511.5,676.9 512.5,676.4 513.5,675.9 514.5,675.3 515.5,674.8 516.5,674.4 517.5,673.9 518.5,673.4 519.5,672.9 520.5,672.5 521.5,672.1 522.5,671.6 523.5,671.2 524.5,670.8 525.5,670.4 526.5,670.1 527.5,669.7 528.5,669.4 529.5,669.0 530.5,668.7 531.5,668.4 532.5,668.1 533.5,667.8 534.5,667.6 535.5,667.3 536.5,667.1 537.5,666.8 538.5,666.6 539.5,666.4 540.5,666.3 541.5,666.1 542.5,665.9 543.5,665.8 544.5,665.7 545.5,665.6 546.5,665.5 547.5,665.4 548.5,665.3 549.5,665.3 550.5,665.2 551.5,665.2 552.5,665.2 553.5,665.2 554.5,665.2 555.5,665.3 556.5,665.3 557.5,665.4 558.5,665.5 559.5,665.6 560.5,665.7 561.5,665.8 562.5,665.9 563.5,666.1 564.5,666.3 565.5,666.4 566.5,666.6 567.5,666.8 568.5,667.1 569.5,667.3 570.5,667.6 571.5,667.8 572.5,668.1 573.5,668.4 574.5,668.7 575.5,669.0 576.5,669.4 577.5,669.7 578.5,670.1 579.5,670.4 580.5,670.8 581.5,671.2 582.5,671.6 583.5,672.1 584.5,672.5 585.5,672.9 586.5,673.4 587.5,673.9 588.5,674.4 589.5,674.8 590.5,675.3 591.5,675.9 592.5,676.4 593.5,676.9 594.5,677.5 595.5,678.0 596.5,678.6 597.5,679.2 598.5,679.8 599.5,680.3 600.5,680.9 601.5,681.6 602.5,682.2 603.5,682.8 604.5,683.4 605.5,684.1 606.5,684.7 607.5,685.4 608.5,686.1 609.5,686.7 610.5,687.4 611.5,688.1 612.5,688.8 613.5,689.5 614.5,690.2 615.5,690.9 616.5,691.6 617.5,692.3 618.5,693.0" fill="none" stroke="#ff0000" stroke-width="1.2" shape-rendering="geometricPrecision"/>
</g>
<text x="464" y="639" font-size="14.67" text-anchor="middle">2</text>
<text x="464" y="669" font-size="14.67" text-anchor="middle">1</text>
<text x="464" y="708" font-size="14.67" text-anchor="middle">0</text>
<text x="472" y="719.5" font-size="14.67" text-anchor="middle">0</text>
<text x="552" y="719.5" font-size="14.67" text-anchor="middle">5</text>
<text x="632.5" y="719.5" font-size="14.67" text-anchor="middle">10</text>
<text x="548" y="739" font-size="14.67" text-anchor="middle">Time (sec)</text>
</g>
</svg>
<svg class="a" style="left:0;top:0" width="1402" height="135" viewBox="0 0 1402 135" shape-rendering="crispEdges" font-family='"Liberation Sans", sans-serif'><g transform="translate(12,51)"><path d="M0.5 0.5 H7.5 L10.5 3.5 V12.5 H0.5 Z" fill="#dcdcdc" stroke="#a0a0a0" shape-rendering="geometricPrecision"/><path d="M7.5 0.5 V3.5 H10.5" fill="none" stroke="#a0a0a0" shape-rendering="geometricPrecision"/></g>
<g transform="translate(33,51)"><path d="M0.5 12.5 V4.5 H5.5 L6.5 5.500 H11.500 V7.500" fill="#c8c8c8" stroke="#a0a0a0" shape-rendering="geometricPrecision"/><path d="M0.5 12.5 L3.5 7.5 H15.5 L12.5 12.5 Z" fill="#a8a8a8" stroke="#a0a0a0" shape-rendering="geometricPrecision"/><path d="M8 3 C9.500 0.500,12.500 0.500,14 2.500 M14.5 0.5 V3 H12" fill="none" stroke="#a0a0a0" shape-rendering="geometricPrecision"/></g>
<g transform="translate(57,51)"><rect x="0.5" y="0.5" width="13" height="13" fill="#000" stroke="#000" stroke-width="1"/><rect x="2" y="1" width="10" height="6" fill="#fff"/><rect x="1" y="1" width="1" height="12" fill="#00e0e0"/><rect x="12" y="1" width="1" height="12" fill="#00e0e0"/><rect x="2" y="7" width="10" height="1" fill="#00e0e0"/><rect x="3" y="8" width="8" height="5" fill="#000"/><rect x="8" y="9" width="2" height="3" fill="#fff"/><rect x="11" y="1" width="1" height="1" fill="#fff"/><rect x="1" y="7" width="12" height="1" fill="#00e0e0"/></g>
<g transform="translate(78,51)"><path d="M3.5 5 L5.5 0.5 H13.5 L11.500 5" fill="#e8e8e8" stroke="#a0a0a0" shape-rendering="geometricPrecision"/><rect x="0.5" y="5.5" width="14" height="5" rx="1.5" fill="#d0d0d0" stroke="#a0a0a0" shape-rendering="geometricPrecision"/><path d="M2.5 10.5 V12.5 H12.5 V10.5" fill="#e8e8e8" stroke="#a0a0a0" shape-rendering="geometricPrecision"/><path d="M6 2.500 H11.500 M5.500 4 H10.500" stroke="#a0a0a0" shape-rendering="geometricPrecision"/><circle cx="13" cy="8" r="1.6" fill="#e0e0e0" stroke="#a0a0a0" stroke-width="0.8" shape-rendering="geometricPrecision"/></g>
<g transform="translate(113,51)"><path d="M2 0.500 L6.5 10 M7.5 0.5 L3 10" stroke="#a0a0a0" stroke-width="1.2" fill="none" shape-rendering="geometricPrecision"/><circle cx="2.2" cy="11.500" r="1.8" fill="#f0f0f0" stroke="#a0a0a0" shape-rendering="geometricPrecision"/><circle cx="7.300" cy="11.500" r="1.8" fill="#f0f0f0" stroke="#a0a0a0" shape-rendering="geometricPrecision"/></g>
<g transform="translate(133,51)"><path d="M0.5 0.5 H5.5 L7.5 2.5 V9.5 H0.5 Z" fill="#dcdcdc" stroke="#a0a0a0" shape-rendering="geometricPrecision"/><path d="M6.5 3.5 H11.500 L14.5 6.500 V13.5 H6.5 Z" fill="#dcdcdc" stroke="#a0a0a0" shape-rendering="geometricPrecision"/><path d="M2 3.500 H5 M2 5.500 H5 M8.500 7.500 H12.500 M8.500 9.500 H12.500 M8.500 11.500 H12.500" stroke="#a0a0a0" shape-rendering="geometricPrecision"/></g>
<g transform="translate(156,51)"><rect x="0.5" y="2.5" width="11" height="11" rx="1" fill="#e4e4e4" stroke="#a0a0a0" shape-rendering="geometricPrecision"/><rect x="3.500" y="0.5" width="5" height="3.500" rx="1" fill="#c8c8c8" stroke="#a0a0a0" shape-rendering="geometricPrecision"/><rect x="6.500" y="6.500" width="8" height="7" fill="#dcdcdc" stroke="#a0a0a0" shape-rendering="geometricPrecision"/><path d="M8.500 9.500 H12.500 M8.500 11.500 H12.500" stroke="#a0a0a0" shape-rendering="geometricPrecision"/></g>
<g transform="translate(186,51)"><path d="M0 11.500 H13" stroke="#a0a0a0" stroke-width="1.2" shape-rendering="geometricPrecision"/><path d="M12 8.500 L16 11.500 L12 14.500 Z" fill="#a0a0a0"/><path d="M3 4.500 H8 M5.500 2 V7" stroke="#a0a0a0" shape-rendering="geometricPrecision"/></g>
<g transform="translate(209,51)"><path d="M0 11.500 H13" stroke="#a0a0a0" stroke-width="1.2" shape-rendering="geometricPrecision"/><path d="M12 8.500 L16 11.500 L12 14.500 Z" fill="#a0a0a0"/><path d="M3 4.500 H8" stroke="#a0a0a0" shape-rendering="geometricPrecision"/></g>
<g transform="translate(242,51)"><path d="M6 0 L12 6 H0 Z M6 7 L10 10.500 H2 Z M6 11.500 L8.500 14.500 H3.500 Z" fill="#000" shape-rendering="geometricPrecision"/></g>
<g transform="translate(265,51)"><path d="M0 1 H12 L6 7 Z M2 8 H10 L6 11.500 Z M3.500 12.500 H8.500 L6 15 Z" fill="#000" shape-rendering="geometricPrecision"/></g>
<g transform="translate(305,51)"><path d="M0 0 L9 7.500 L0 15 Z" fill="#9c9c9c" shape-rendering="geometricPrecision"/></g>
<g transform="translate(323,51)"><rect x="0" y="0" width="16" height="15" fill="#fff"/><rect x="4" y="2" width="3" height="12" fill="#ff0000"/><rect x="9" y="2" width="3" height="12" fill="#ff0000"/></g>
<g transform="translate(346,51)"><rect x="0" y="0" width="16" height="15" fill="#dcdcdc"/><ellipse cx="10.500" cy="5.500" rx="3.200" ry="2.500" transform="rotate(-35 10.500 5.500)" fill="#a8a8a8" shape-rendering="geometricPrecision"/><circle cx="6" cy="10" r="2" fill="#a8a8a8" shape-rendering="geometricPrecision"/></g>
<g transform="translate(369,51)"><rect x="0" y="0" width="16" height="15" fill="#dcdcdc"/><circle cx="9.500" cy="3.500" r="2.400" fill="#a8a8a8" shape-rendering="geometricPrecision"/><circle cx="5" cy="7" r="2" fill="#a8a8a8" shape-rendering="geometricPrecision"/><circle cx="11" cy="8.500" r="2.600" fill="#a8a8a8" shape-rendering="geometricPrecision"/><circle cx="7" cy="12.500" r="2" fill="#a8a8a8" shape-rendering="geometricPrecision"/></g>
<g transform="translate(408,51)"><rect x="0" y="0" width="16" height="15" fill="#fff"/><rect x="1.5" y="2.5" width="11" height="10" fill="#fff" stroke="#000" stroke-width="1.3"/><text x="4.5" y="11" font-size="9.5" fill="#ff0000" >1</text><rect x="13" y="7" width="3" height="1" fill="#0000ff"/></g>
<g transform="translate(431,51)"><rect x="0" y="0" width="16" height="15" fill="#fff"/><path d="M2 11.500 H8 L15 4.500" fill="none" stroke="#0000ff" stroke-width="1.1" shape-rendering="geometricPrecision"/></g>
<g transform="translate(454,51)"><rect x="0" y="0" width="16" height="15" fill="#fff"/><path d="M2 11.500 H5.500 V3.500 H14" fill="none" stroke="#0000ff" stroke-width="1.1" /></g>
<g transform="translate(477,51)"><rect x="0" y="0" width="16" height="15" fill="#fff"/><path d="M2 11.500 H15 M4.500 11.500 V3 M8.500 11.500 V3 M12.500 11.500 V3" fill="none" stroke="#0000ff" stroke-width="1.1" /></g>
<g transform="translate(500,51)"><rect x="0" y="0" width="16" height="15" fill="#fff"/><path d="M1.500 7.500 C3 1.500,5.500 1.500,7.500 7.500 S12.500 13.500,14.500 7" fill="none" stroke="#0000ff" stroke-width="1.3" shape-rendering="geometricPrecision"/></g>
<g transform="translate(523,51)"><rect x="0" y="0" width="16" height="15" fill="#fff"/><rect x="0.5" y="0.5" width="11" height="14" fill="#fff" stroke="#808080" stroke-width="1"/><rect x="2" y="3" width="2" height="1" fill="#000"/><rect x="5" y="3" width="2" height="1" fill="#000"/><rect x="8" y="3" width="1" height="1" fill="#0000ff"/><rect x="2" y="5" width="2" height="1" fill="#000"/><rect x="5" y="5" width="2" height="1" fill="#000"/><rect x="8" y="6" width="1" height="1" fill="#0000ff"/><rect x="2" y="7" width="2" height="1" fill="#000"/><rect x="5" y="7" width="2" height="1" fill="#000"/><rect x="8" y="7" width="1" height="1" fill="#0000ff"/><rect x="2" y="9" width="2" height="1" fill="#000"/><rect x="5" y="9" width="2" height="1" fill="#000"/><rect x="8" y="10" width="1" height="1" fill="#0000ff"/><rect x="2" y="11" width="2" height="1" fill="#000"/><rect x="5" y="11" width="2" height="1" fill="#000"/><rect x="8" y="11" width="1" height="1" fill="#0000ff"/><rect x="11" y="0" width="1" height="15" fill="#000080"/><rect x="12" y="3" width="4" height="1" fill="#0000ff"/><rect x="12" y="7" width="4" height="1" fill="#0000ff"/><rect x="12" y="11" width="4" height="1" fill="#0000ff"/></g>
<g transform="translate(546,51)"><rect x="0" y="0" width="16" height="15" fill="#fff"/><path d="M1 11.500 L5 2.500 V11.500 L10 2.500 V11.500 L15 2.500 V11.500" fill="none" stroke="#0000ff" stroke-width="1.2" shape-rendering="geometricPrecision"/></g>
<g transform="translate(569,51)"><rect x="0" y="0" width="16" height="15" fill="#fff"/><path d="M0.5 11.500 H2.500 V3.500 H6.500 V11.500 H9.500 V3.500 H13.500 V11.500 H15.500" fill="none" stroke="#0000ff" stroke-width="1.1" /></g>
<g transform="translate(592,51)"><rect x="0" y="0" width="16" height="15" fill="#fff"/><path d="M1 11 L4 4 L7.500 11 L10.500 4 L13.500 11 L16 4" fill="none" stroke="#0000ff" stroke-width="1.2" shape-rendering="geometricPrecision"/></g>
<g transform="translate(615,51)"><rect x="0" y="0" width="15" height="15" fill="#fff"/><text x="2" y="11.5" font-size="9.5" fill="#000" textLength="11">On</text><rect x="14" y="1" width="1" height="13" fill="#000"/><rect x="1" y="13" width="14" height="1" fill="#000"/></g>
<g transform="translate(638,51)"><rect x="0" y="0" width="16" height="15" fill="#fff"/><rect x="0.7" y="0.7" width="13.6" height="9" fill="#fff" stroke="#800000" stroke-width="1.4"/><text x="2.5" y="8" font-size="8" fill="#0000ff" textLength="10">1.2</text><rect x="7" y="10" width="2" height="5" fill="#800000"/><rect x="1" y="12" width="5" height="1" fill="#000"/><rect x="10" y="12" width="5" height="1" fill="#000"/><rect x="15" y="7" width="1" height="1" fill="#0000ff"/></g>
<g transform="translate(677,51)"><rect x="0" y="0" width="16" height="15" fill="#fff"/><path d="M0 5.0 L3 7.5 L0 10.0 Z" fill="#0000ff"/><rect x="3.7" y="2.7" width="12" height="10" fill="#fff" stroke="#000" stroke-width="1.4"/><text x="7" y="11.5" font-size="10" fill="#ff0000" >0</text></g>
<g transform="translate(700,51)"><rect x="0" y="0" width="16" height="15" fill="#fff"/><rect x="3.7" y="0.7" width="12" height="13.6" fill="#ffee99" stroke="#000" stroke-width="1.4"/><path d="M0 1.0 L3 3.5 L0 6.0 Z" fill="#ff0000"/><path d="M0 9.0 L3 11.5 L0 14.0 Z" fill="#0000ff"/><path d="M4.500 11 C6 3,8.500 2.500,10 6.500 S13 10,15 5" fill="none" stroke="#ff0000" stroke-width="1.2" shape-rendering="geometricPrecision"/><rect x="4" y="3" width="1" height="1" fill="#000"/><rect x="4" y="6" width="1" height="1" fill="#000"/><rect x="4" y="9" width="1" height="1" fill="#000"/><rect x="6" y="13" width="1" height="1" fill="#000"/><rect x="9" y="13" width="1" height="1" fill="#000"/><rect x="12" y="13" width="1" height="1" fill="#000"/></g>
<g transform="translate(723,51)"><rect x="0" y="0" width="16" height="15" fill="#fff"/><path d="M0 5.0 L3 7.5 L0 10.0 Z" fill="#0000ff"/><ellipse cx="7.500" cy="7.500" rx="3.700" ry="4" fill="#00f0f0" stroke="#000" stroke-width="1.2" shape-rendering="geometricPrecision"/><path d="M7 5 H9.500 V7" stroke="#d0ffff" fill="none"/></g>
<g transform="translate(746,51)"><rect x="0" y="0" width="16" height="15" fill="#fff"/><path d="M0 5.0 L3 7.5 L0 10.0 Z" fill="#0000ff"/><rect x="3.7" y="1.7" width="12" height="12" fill="#fff" stroke="#000" stroke-width="1.4"/><text x="4.5" y="6.5" font-size="6" fill="#ff0000" font-weight="bold">0</text><text x="11" y="6.5" font-size="7" fill="#ff0000" font-weight="bold">1</text><path d="M9.500 11 L14 6.500" fill="none" stroke="#00a020" stroke-width="1.5" shape-rendering="geometricPrecision"/><rect x="8.5" y="10" width="2" height="2" fill="#0000ff"/></g>
<g transform="translate(769,51)"><rect x="0" y="0" width="16" height="15" fill="#fff"/><path d="M0 5.0 L3 7.5 L0 10.0 Z" fill="#0000ff"/><rect x="3.7" y="0.7" width="12" height="13.6" fill="#fff" stroke="#000" stroke-width="1.4"/><path d="M5.500 13 V9 H8 V6 H9.500 V3.500 H11.500 V6 H12.500 V9 H14 V13 Z" fill="#e010e0"/></g>
<g transform="translate(792,51)"><rect x="0" y="0" width="16" height="15" fill="#fff"/><rect x="5.5" y="0.5" width="10" height="14" fill="#fff" stroke="#808080" stroke-width="1"/><rect x="7" y="3" width="2" height="1" fill="#000"/><rect x="10" y="3" width="2" height="1" fill="#000"/><rect x="13" y="3" width="1" height="1" fill="#0000ff"/><rect x="7" y="5" width="2" height="1" fill="#000"/><rect x="10" y="5" width="2" height="1" fill="#000"/><rect x="13" y="6" width="1" height="1" fill="#0000ff"/><rect x="7" y="7" width="2" height="1" fill="#000"/><rect x="10" y="7" width="2" height="1" fill="#000"/><rect x="13" y="7" width="1" height="1" fill="#0000ff"/><rect x="7" y="9" width="2" height="1" fill="#000"/><rect x="10" y="9" width="2" height="1" fill="#000"/><rect x="13" y="10" width="1" height="1" fill="#0000ff"/><rect x="7" y="11" width="2" height="1" fill="#000"/><rect x="10" y="11" width="2" height="1" fill="#000"/><rect x="13" y="11" width="1" height="1" fill="#0000ff"/><rect x="0" y="3.0" width="5" height="1" fill="#0000ff"/><path d="M2.500 1.5 L4.500 3.5 L2.500 5.5 Z" fill="#0000ff"/><rect x="0" y="7.0" width="5" height="1" fill="#0000ff"/><path d="M2.500 5.5 L4.500 7.5 L2.500 9.5 Z" fill="#0000ff"/><rect x="0" y="11.0" width="5" height="1" fill="#0000ff"/><path d="M2.500 9.5 L4.500 11.5 L2.500 13.5 Z" fill="#0000ff"/><rect x="15" y="0" width="1" height="1" fill="#000080"/><rect x="15" y="14" width="1" height="1" fill="#000080"/></g>
<g transform="translate(815,51)"><rect x="0" y="0" width="16" height="15" fill="#fff"/><path d="M0 5.0 L3 7.5 L0 10.0 Z" fill="#0000ff"/><path d="M5.500 0.5 H11.500 L15.500 4.500 V10.500 L11.500 14.500 H5.500 L2 10.500 V4.500 Z" fill="#ff0000" shape-rendering="geometricPrecision"/><path d="M5.500 4.500 L11.500 10.500 M11.500 4.500 L5.500 10.500" stroke="#fff" stroke-width="2.600" fill="none" shape-rendering="geometricPrecision"/></g>
<g transform="translate(838,51)"><rect x="0" y="0" width="16" height="15" fill="#fff"/><path d="M0 5.0 L3 7.5 L0 10.0 Z" fill="#0000ff"/><rect x="3.7" y="2.7" width="12" height="10" fill="#fff" stroke="#000" stroke-width="1.4"/><text x="5.5" y="10.5" font-size="7" fill="#ff0000" font-weight="bold" textLength="9.500" lengthAdjust="spacingAndGlyphs">Err</text></g>
<g transform="translate(875,53)"><rect x="0" y="0" width="16" height="11" fill="#fff"/><text x="0.5" y="8.5" font-size="8.5" fill="#ff0000" textLength="15" lengthAdjust="spacingAndGlyphs" stroke="#ff0000" stroke-width="0.35">label</text></g>
<g transform="translate(898,51)"><rect x="3" y="0" width="10" height="15" fill="#fff"/><rect x="0" y="2" width="4" height="1" fill="#0000ff"/><path d="M2 0.5 L4.5 2.5 L2 4.5 Z" fill="#0000ff"/><rect x="0" y="7" width="4" height="1" fill="#0000ff"/><path d="M2 5.5 L4.5 7.5 L2 9.5 Z" fill="#0000ff"/><rect x="0" y="12" width="4" height="1" fill="#0000ff"/><path d="M2 10.5 L4.5 12.5 L2 14.5 Z" fill="#0000ff"/><rect x="6" y="7" width="4" height="1" fill="#ff0000"/><path d="M8 5.5 L10.5 7.5 L8 9.5 Z" fill="#ff0000"/><rect x="13" y="6" width="3" height="3" fill="#0000ff"/></g>
<g transform="translate(921,51)"><rect x="4" y="0" width="9" height="15" fill="#fff"/><path d="M0 5.500 L2 4.500 L4.500 7.500 L2 10.500 L0 9.500 Z" fill="#0000ff"/><rect x="6" y="7" width="4" height="1" fill="#ff0000"/><path d="M8 5.5 L10.5 7.5 L8 9.5 Z" fill="#ff0000"/><rect x="13" y="2" width="3" height="1" fill="#0000ff"/><rect x="13" y="7" width="3" height="1" fill="#0000ff"/><rect x="13" y="12" width="3" height="1" fill="#0000ff"/></g>
<g transform="translate(944,51)"><rect x="0.5" y="0.5" width="12" height="14" fill="#fff" stroke="#808080" stroke-width="1"/><rect x="2" y="3" width="2" height="1" fill="#000"/><rect x="5" y="3" width="2" height="1" fill="#000"/><rect x="8" y="3" width="1" height="1" fill="#0000ff"/><rect x="2" y="5" width="2" height="1" fill="#000"/><rect x="5" y="5" width="2" height="1" fill="#000"/><rect x="8" y="6" width="1" height="1" fill="#0000ff"/><rect x="2" y="7" width="2" height="1" fill="#000"/><rect x="5" y="7" width="2" height="1" fill="#000"/><rect x="8" y="7" width="1" height="1" fill="#0000ff"/><rect x="2" y="9" width="2" height="1" fill="#000"/><rect x="5" y="9" width="2" height="1" fill="#000"/><rect x="8" y="10" width="1" height="1" fill="#0000ff"/><rect x="2" y="11" width="2" height="1" fill="#000"/><rect x="5" y="11" width="2" height="1" fill="#000"/><rect x="8" y="11" width="1" height="1" fill="#0000ff"/><rect x="10.5" y="1.5" width="2" height="12" fill="#fff" stroke="#000" stroke-width="0.8"/><rect x="10" y="1" width="3" height="2" fill="#000"/><rect x="10" y="12" width="3" height="2" fill="#000"/></g>
<g transform="translate(967,52)"><rect x="0" y="0" width="16" height="13" fill="#fff"/><text x="0" y="10" font-size="10" fill="#ff0000" font-weight="bold" textLength="16" lengthAdjust="spacingAndGlyphs" stroke="#ff0000" stroke-width="0.4">var</text></g>
<g transform="translate(990,51)"><rect x="0" y="0" width="16" height="15" fill="#fff"/><rect x="0" y="7" width="16" height="1" fill="#0000ff"/><path d="M4 3 L8.500 7.500 L4 12 Z" fill="#0000ff"/></g>
<g transform="translate(1013,52)"><rect x="0" y="0" width="16" height="13" fill="#fff"/><text x="0" y="10" font-size="9" fill="#ff0000" textLength="16" lengthAdjust="spacingAndGlyphs" stroke="#ff0000" stroke-width="0.35">date</text></g>
<g transform="translate(1036,51)"><rect x="0" y="0" width="16" height="15" fill="#4410c0"/><text x="0.3" y="10" font-size="7" fill="#fff" font-weight="bold" textLength="15.400" lengthAdjust="spacingAndGlyphs">BEZEL</text></g>
<g transform="translate(1073,51)"><rect x="0" y="0" width="16" height="15" fill="#fff"/><path d="M8 3 V11 M4.500 5 L11.500 9.500 M11.500 5 L4.500 9.500" fill="none" stroke="#0000ff" stroke-width="1.5" shape-rendering="geometricPrecision"/><rect x="3" y="8" width="1" height="1" fill="#ff00ff"/><rect x="11" y="8" width="1" height="1" fill="#00ffff"/></g>
<g transform="translate(1096,51)"><rect x="0" y="0" width="16" height="15" fill="#fff"/><path d="M2.500 14 L15 2" fill="none" stroke="#0000ff" stroke-width="1.5" shape-rendering="geometricPrecision"/></g>
<g transform="translate(1119,51)"><rect x="0" y="0" width="16" height="15" fill="#fff"/><rect x="6.5" y="1" width="2.2" height="13" fill="#007000"/><rect x="1.5" y="6.2" width="12.5" height="2.2" fill="#007000"/></g>
<g transform="translate(1142,51)"><rect x="0" y="0" width="16" height="15" fill="#fff"/><rect x="2" y="1" width="2" height="13" fill="#0000ff"/><rect x="13" y="1" width="2" height="13" fill="#0000ff"/><path d="M6.500 6 L11 12.500 M11 6 L6.500 12.500" fill="none" stroke="#0000ff" stroke-width="1" shape-rendering="geometricPrecision"/></g>
<g transform="translate(1165,51)"><rect x="0" y="0" width="16" height="15" fill="#fff"/><text x="0.5" y="6.5" font-size="7" fill="#000" textLength="15" lengthAdjust="spacingAndGlyphs" stroke="#000" stroke-width="0.3">Type</text><text x="1" y="14" font-size="8" fill="#000" textLength="12" lengthAdjust="spacingAndGlyphs" stroke="#000" stroke-width="0.3">Cvt</text></g>
<g transform="translate(1188,51)"><rect x="0" y="0" width="16" height="15" fill="#fff"/><path d="M1.500 2.500 H9.500 L14.500 7.500 L9.500 12.500 H1.500 Z" fill="#fff" stroke="#000" stroke-width="1.2" shape-rendering="geometricPrecision"/><text x="4" y="11" font-size="9" fill="#ff0000" font-weight="bold">1</text><rect x="0" y="7" width="1" height="1" fill="#0000ff"/><rect x="15" y="7" width="1" height="1" fill="#0000ff"/></g>
<g transform="translate(1211,51)"><rect x="0" y="0" width="16" height="15" fill="#fff"/><text x="5.5" y="6.5" font-size="8.5" fill="#0000ff" font-weight="bold">1</text><rect x="2" y="7" width="12" height="1" fill="#0000ff"/><path d="M5 9.500 L10.500 14 M10.500 9.500 L5 14" fill="none" stroke="#0000ff" stroke-width="1" shape-rendering="geometricPrecision"/></g>
<g transform="translate(1234,51)"><rect x="0" y="0" width="16" height="15" fill="#fff"/><rect x="1" y="9" width="4" height="2" fill="#0000ff"/><path d="M7.500 6.500 L12.500 13 M12.500 6.500 L7.500 13" fill="none" stroke="#0000ff" stroke-width="1" shape-rendering="geometricPrecision"/></g>
<g transform="translate(1257,51)"><rect x="0" y="0" width="16" height="15" fill="#fff"/><path d="M2.500 8 L7.500 13.500 M7.500 8 L2.500 13.500" fill="none" stroke="#0000ff" stroke-width="1" shape-rendering="geometricPrecision"/><text x="8.5" y="6.5" font-size="9" fill="#0000ff" font-weight="bold" style="font-family:Liberation Serif">n</text></g>
<g transform="translate(1280,51)"><rect x="0" y="0" width="16" height="15" fill="#fff"/><text x="0" y="10.5" font-size="8" fill="#0000ff" font-weight="bold" textLength="15.500" lengthAdjust="spacingAndGlyphs">Sign</text></g>
<g transform="translate(1303,51)"><rect x="0" y="0" width="16" height="15" fill="#fff"/><text x="1" y="7" font-size="8" fill="#000" textLength="14" lengthAdjust="spacingAndGlyphs" stroke="#000" stroke-width="0.3">Unit</text><text x="1" y="14" font-size="8" fill="#000" textLength="12" lengthAdjust="spacingAndGlyphs" stroke="#000" stroke-width="0.3">Cvt</text></g>
<g transform="translate(1135,81)"><rect x="0" y="0" width="16" height="15" fill="#fff"/><text x="0.5" y="11" font-size="9.5" fill="#ff0000" font-weight="bold">1</text><path d="M5.300 11.500 L8.300 3.500" fill="none" stroke="#0000ff" stroke-width="1.1" shape-rendering="geometricPrecision"/><text x="8.5" y="11" font-size="9.5" fill="#ff0000" font-weight="bold">S</text></g>
<g transform="translate(1158,81)"><rect x="0" y="0" width="16" height="15" fill="#fff"/><text x="0.5" y="11" font-size="9.5" fill="#ff0000" font-weight="bold">1</text><path d="M5.300 11.500 L8.300 3.500" fill="none" stroke="#0000ff" stroke-width="1.1" shape-rendering="geometricPrecision"/><text x="8.5" y="11" font-size="9.5" fill="#ff0000" font-weight="bold">Z</text></g>
<g transform="translate(1181,80)"><rect x="0" y="0" width="16" height="16" fill="#fff"/><text x="0.5" y="10" font-size="7" fill="#ff0000" font-weight="bold">1</text><text x="8" y="6.5" font-size="8" fill="#ff0000" font-weight="bold">1</text><rect x="6" y="7" width="9" height="1" fill="#ff0000"/><text x="7" y="15" font-size="8.5" fill="#ff0000" font-weight="bold">S</text></g>
<g transform="translate(1204,81)"><rect x="0" y="0" width="16" height="15" fill="#fff"/><text x="0.5" y="11" font-size="8" fill="#000080" font-weight="bold" textLength="15" lengthAdjust="spacingAndGlyphs">S-H</text></g>
<g transform="translate(1227,80)"><rect x="0" y="0" width="16" height="16" fill="#fff"/><text x="0.5" y="14" font-size="12.5" fill="#0000ff" font-weight="bold">e</text><text x="7.5" y="6.5" font-size="6" fill="#0000ff" font-weight="bold" textLength="8.500" lengthAdjust="spacingAndGlyphs">-ST</text></g>
<g transform="translate(1250,80)"><rect x="0" y="0" width="16" height="16" fill="#fff"/><text x="2.5" y="7" font-size="6.5" fill="#0000ff" font-weight="bold">A</text><text x="10" y="7" font-size="6.5" fill="#0000ff" font-weight="bold">B</text><text x="2.5" y="14" font-size="6.5" fill="#0000ff" font-weight="bold">C</text><text x="10" y="14" font-size="6.5" fill="#0000ff" font-weight="bold">D</text></g>
<g transform="translate(1273,80)"><rect x="0" y="0" width="16" height="16" fill="#fff"/><text x="0.5" y="8.5" font-size="9.5" fill="#ff0000" font-weight="bold">1</text><path d="M5 9 L8 0.500" fill="none" stroke="#0000ff" stroke-width="1" shape-rendering="geometricPrecision"/><text x="7.5" y="8.5" font-size="9.5" fill="#ff0000" font-weight="bold">S</text><text x="0.5" y="15" font-size="5.5" fill="#0000ff" font-weight="bold" textLength="15" lengthAdjust="spacingAndGlyphs">LIMIT</text></g>
<g transform="translate(1296,80)"><rect x="0" y="0" width="16" height="16" fill="#fff"/><text x="0.5" y="8.5" font-size="9.5" fill="#ff0000" font-weight="bold">1</text><path d="M5 9 L8 0.500" fill="none" stroke="#0000ff" stroke-width="1" shape-rendering="geometricPrecision"/><text x="7.5" y="8.5" font-size="9.5" fill="#ff0000" font-weight="bold">S</text><text x="0.5" y="15" font-size="5.5" fill="#0000ff" font-weight="bold" textLength="15" lengthAdjust="spacingAndGlyphs">RESET</text></g>
<g transform="translate(9,81)"><rect x="0" y="0" width="16" height="15" fill="#fff"/><path d="M5 3 L10 7.500 L5 12" fill="none" stroke="#0000ff" stroke-width="1.7" shape-rendering="geometricPrecision"/></g>
<g transform="translate(32,81)"><rect x="0" y="0" width="16" height="15" fill="#fff"/><path d="M2 3 L7 7.500 L2 12" fill="none" stroke="#0000ff" stroke-width="1.7" shape-rendering="geometricPrecision"/><rect x="9" y="5" width="5" height="2" fill="#0000ff"/><rect x="9" y="8" width="5" height="2" fill="#0000ff"/></g>
<g transform="translate(55,81)"><rect x="0" y="0" width="16" height="15" fill="#fff"/><path d="M10 3 L5 7.500 L10 12" fill="none" stroke="#0000ff" stroke-width="1.7" shape-rendering="geometricPrecision"/></g>
<g transform="translate(78,81)"><rect x="0" y="0" width="16" height="15" fill="#fff"/><path d="M7 3 L2 7.500 L7 12" fill="none" stroke="#0000ff" stroke-width="1.7" shape-rendering="geometricPrecision"/><rect x="9" y="5" width="5" height="2" fill="#0000ff"/><rect x="9" y="8" width="5" height="2" fill="#0000ff"/></g>
<g transform="translate(101,81)"><rect x="0" y="0" width="16" height="15" fill="#fff"/><rect x="5" y="5" width="6" height="2" fill="#0000ff"/><rect x="5" y="8" width="6" height="2" fill="#0000ff"/></g>
<g transform="translate(124,81)"><rect x="0" y="0" width="16" height="15" fill="#fff"/><rect x="4" y="5" width="8" height="2" fill="#0000ff"/><rect x="4" y="8" width="8" height="2" fill="#0000ff"/><path d="M10 2.500 L6 12.500" fill="none" stroke="#0000ff" stroke-width="1.7" shape-rendering="geometricPrecision"/></g>
<g transform="translate(147,81)"><rect x="0" y="0" width="16" height="15" fill="#fff"/><path d="M5 12 V7.500 C5 3.500,11 3.500,11 7.500 V12" fill="none" stroke="#800000" stroke-width="1.9" shape-rendering="geometricPrecision"/></g>
<g transform="translate(170,81)"><rect x="0" y="0" width="16" height="15" fill="#fff"/><path d="M5 3.500 V8 C5 12,11 12,11 8 V3.500" fill="none" stroke="#800000" stroke-width="1.9" shape-rendering="geometricPrecision"/></g>
<g transform="translate(193,81)"><rect x="0" y="0" width="16" height="15" fill="#fff"/><rect x="4" y="2" width="8" height="2" fill="#0000ff"/><path d="M5 6 L11 12.500 M11 6 L5 12.500" fill="none" stroke="#0000ff" stroke-width="1.8" shape-rendering="geometricPrecision"/></g>
<g transform="translate(160,111)"><path d="M3.500 12.500 V7.500 L6.500 5.500 H12.500 V12.500 Z" fill="#dcdcdc" stroke="#a0a0a0" shape-rendering="geometricPrecision"/><path d="M0.500 1 L5 5.500 M4 0.500 L5 4 M7.500 1 L5.500 4.500 M0.500 4 L4 5.500 M0 7 L3 6.500" stroke="#a0a0a0" stroke-width="0.9" shape-rendering="geometricPrecision"/><path d="M6 10.500 V9 M8 10.500 V8.500 H9.500 M10.500 10.500 V10" stroke="#808080" shape-rendering="geometricPrecision"/><rect x="12.500" y="8" width="2.500" height="1" fill="#a0a0a0"/></g>
<g transform="translate(182,111)"><path d="M0.500 14.500 V8.500 H4 L7 5.500 H11.500 V14.500 Z" fill="#d8d8d8" stroke="#a0a0a0" shape-rendering="geometricPrecision"/><path d="M4 8.500 L9.500 12.500 M6 6.500 L11 10.500 M2.500 10 L5 12" stroke="#b0b0b0" stroke-width="0.8" shape-rendering="geometricPrecision"/><path d="M2.500 12.500 H5 M6.500 12.500 H9" stroke="#909090" shape-rendering="geometricPrecision"/><path d="M9 2 L11.500 4.500 L14.500 0.500" stroke="#a0a0a0" stroke-width="1.100" fill="none" shape-rendering="geometricPrecision"/><path d="M8 5 L11.500 4.500 L15.500 4.500 V10.500 L12.500 8.500 L9 8 Z" fill="#b8b8b8" stroke="#a0a0a0" stroke-width="0.8" shape-rendering="geometricPrecision"/></g></svg>
</body></html>
